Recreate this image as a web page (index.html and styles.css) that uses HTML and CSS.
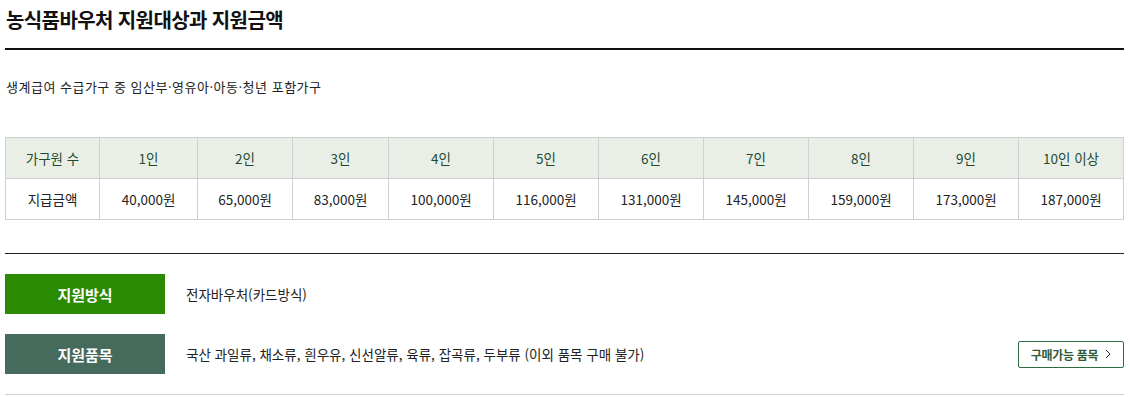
FILE: index.html
```html
<!DOCTYPE html>
<html lang="ko">
<head>
<meta charset="utf-8">
<link rel="stylesheet" href="styles.css">
</head>
<body>
<div class="wrap">
  <h2 class="title">농식품바우처 지원대상과 지원금액</h2>
  <p class="target">생계급여 수급가구 중 임산부·영유아·아동·청년 포함가구</p>
  <table class="amount">
    <thead>
      <tr>
        <th>가구원 수</th><th>1인</th><th>2인</th><th>3인</th><th>4인</th><th>5인</th><th>6인</th><th>7인</th><th>8인</th><th>9인</th><th>10인 이상</th>
      </tr>
    </thead>
    <tbody>
      <tr>
        <td>지급금액</td><td>40,000원</td><td>65,000원</td><td>83,000원</td><td>100,000원</td><td>116,000원</td><td>131,000원</td><td>145,000원</td><td>159,000원</td><td>173,000원</td><td>187,000원</td>
      </tr>
    </tbody>
  </table>
  <div class="info">
    <div class="info-row">
      <div class="label label-method">지원방식</div>
      <div class="desc">전자바우처(카드방식)</div>
    </div>
    <div class="info-row">
      <div class="label label-item">지원품목</div>
      <div class="desc">국산 과일류, 채소류, 흰우유, 신선알류, 육류, 잡곡류, 두부류 (이외 품목 구매 불가)</div>
      <a class="more-btn" href="#">구매가능 품목 <svg class="chev" width="6" height="10" viewBox="0 0 6 10"><path d="M1 1l4 4-4 4" fill="none" stroke="#333" stroke-width="1"/></svg></a>
    </div>
  </div>
</div>
</body>
</html>
```

FILE: styles.css
```css
* { box-sizing: border-box; }
html, body { margin: 0; padding: 0; background: #fff; }
body {
  font-family: "Noto Sans CJK KR", "Noto Sans", sans-serif;
  color: #222;
}
.wrap {
  width: 1119px;
  margin-left: 5px;
}
.title {
  margin: 0;
  padding: 6px 0 14px 1px;
  font-size: 20px;
  line-height: 28px;
  font-weight: 700;
  color: #111;
  border-bottom: 2px solid #111;
  letter-spacing: -0.6px;
}
.target {
  margin: 27px 0 0 1px;
  font-size: 13px;
  line-height: 20px;
  color: #222;
  letter-spacing: 0.5px;
}
.amount {
  margin-top: 40px;
  width: 1119px;
  border-collapse: collapse;
  font-size: 13.5px;
  table-layout: fixed;
}
.amount th, .amount td {
  border: 1px solid #cfcfcf;
  height: 41px;
  padding: 0;
  text-align: center;
  font-weight: 400;
}
.amount th {
  background: #e9efe7;
  color: #1e4a31;
}
.amount td { color: #222; }
.amount th:nth-child(1) { width: 94px; }
.amount th:nth-child(2) { width: 98px; }
.amount th:nth-child(3) { width: 95px; }
.amount th:nth-child(4) { width: 96px; }
.info {
  margin-top: 33px;
  border-top: 1px solid #222;
  border-bottom: 1px solid #d0d0d0;
  padding: 20px 0;
  display: flex;
  flex-direction: column;
  gap: 20px;
}
.info-row {
  display: flex;
  align-items: center;
  height: 40px;
}
.label {
  width: 160px;
  height: 40px;
  display: flex;
  align-items: center;
  justify-content: center;
  color: #fff;
  font-size: 15px;
  font-weight: 700;
}
.label-method { background: #2a8a02; }
.label-item { background: #466b5c; }
.desc {
  margin-left: 21px;
  font-size: 13.5px;
  color: #222;
  flex: 1;
}
.more-btn {
  width: 106px;
  height: 27px;
  border: 1px solid #2f6e3c;
  border-radius: 2px;
  display: flex;
  align-items: center;
  justify-content: center;
  gap: 7px;
  font-size: 12px;
  font-weight: 700;
  color: #2f5a3a;
  text-decoration: none;
  letter-spacing: -0.3px;
}
.chev { display: block; }
```
